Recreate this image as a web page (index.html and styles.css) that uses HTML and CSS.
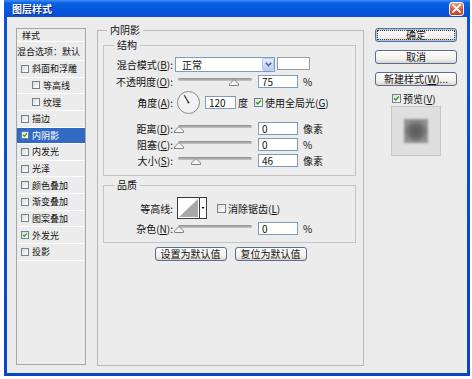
FILE: index.html
```html
<!DOCTYPE html>
<html lang="zh-CN">

<head>
  <meta charset="UTF-8">
  <meta name="viewport" content="width=device-width, initial-scale=1.0">
  <title>图层样式</title>
  <link rel="stylesheet" href="styles.css">
</head>

<body>
  <div class="window">
    <div class="titlebar">
      <span class="title">图层样式</span>
      <span class="close">
        <svg width="9" height="9" viewBox="0 0 9 9"><path d="M1 1 L8 8 M8 1 L1 8" stroke="#fff" stroke-width="1.8" stroke-linecap="round"/></svg>
      </span>
    </div>

    <div class="client">
      <ul class="styles-list">
        <li class="head">样式</li>
        <li class="blend">混合选项：默认</li>
        <li><span class="cb"></span>斜面和浮雕</li>
        <li class="sub"><span class="cb"></span>等高线</li>
        <li class="sub"><span class="cb"></span>纹理</li>
        <li><span class="cb"></span>描边</li>
        <li class="selected"><span class="cb"><svg viewBox="0 0 8 8"><path d="M1.3 3.8 L3.2 5.7 L6.7 1.8" stroke="#21a121" stroke-width="1.6" fill="none"/></svg></span>内阴影</li>
        <li><span class="cb"></span>内发光</li>
        <li><span class="cb"></span>光泽</li>
        <li><span class="cb"></span>颜色叠加</li>
        <li><span class="cb"></span>渐变叠加</li>
        <li><span class="cb"></span>图案叠加</li>
        <li><span class="cb"><svg viewBox="0 0 8 8"><path d="M1.3 3.8 L3.2 5.7 L6.7 1.8" stroke="#21a121" stroke-width="1.6" fill="none"/></svg></span>外发光</li>
        <li><span class="cb"></span>投影</li>
      </ul>

      <fieldset class="panel">
        <legend>内阴影</legend>

        <fieldset class="group">
          <legend>结构</legend>
          <div class="rows structure">
            <div class="row tall">
              <span class="lbl">混合模式(<u>B</u>):</span>
              <div class="select">
                <span>正常</span>
                <span class="drop">
                  <svg width="7" height="5" viewBox="0 0 7 5"><path d="M0.8 0.8 L3.5 3.6 L6.2 0.8" stroke="#4d6185" stroke-width="1.5" fill="none"/></svg>
                </span>
              </div>
              <span class="swatch"></span>
            </div>
            <div class="row">
              <span class="lbl">不透明度(<u>O</u>):</span>
              <div class="slider"><span class="track"></span><span class="thumb" style="left: 75%"></span></div>
              <span class="field">75</span>
              <span class="unit">%</span>
            </div>
            <div class="row angle">
              <span class="lbl">角度(<u>A</u>):</span>
              <svg class="dial" width="25" height="23" viewBox="0 0 25 23">
                <circle cx="12.5" cy="11.5" r="11" fill="#f2f2f2" stroke="#8a8a8a"/>
                <line x1="12.5" y1="11.5" x2="8.3" y2="4.2" stroke="#333" stroke-width="1.2"/>
                <circle cx="12.5" cy="11.5" r="1" fill="#333"/>
              </svg>
              <span class="field short">120</span>
              <span class="unit tight">度</span>
              <span class="cb big"><svg viewBox="0 0 8 8"><path d="M1.3 3.8 L3.2 5.7 L6.7 1.8" stroke="#21a121" stroke-width="1.6" fill="none"/></svg></span>
              <span class="cb-text">使用全局光(<u>G</u>)</span>
            </div>
            <div class="row gap">
              <span class="lbl">距离(<u>D</u>):</span>
              <div class="slider"><span class="track"></span><span class="thumb" style="left: 1%"></span></div>
              <span class="field">0</span>
              <span class="unit">像素</span>
            </div>
            <div class="row">
              <span class="lbl">阻塞(<u>C</u>):</span>
              <div class="slider"><span class="track"></span><span class="thumb" style="left: 1%"></span></div>
              <span class="field">0</span>
              <span class="unit">%</span>
            </div>
            <div class="row">
              <span class="lbl">大小(<u>S</u>):</span>
              <div class="slider"><span class="track"></span><span class="thumb" style="left: 24%"></span></div>
              <span class="field">46</span>
              <span class="unit">像素</span>
            </div>
          </div>
        </fieldset>

        <fieldset class="group quality">
          <legend>品质</legend>
          <div class="rows">
            <div class="row contour-row">
              <span class="lbl">等高线:</span>
              <span class="contour">
                <svg width="30" height="22" viewBox="0 0 30 22">
                  <rect x="0.5" y="0.5" width="29" height="21" fill="#fff" stroke="#3a3a3a"/>
                  <polygon points="2,20 21,2 21,20" fill="#a8a8a8"/>
                  <line x1="22.5" y1="1" x2="22.5" y2="21" stroke="#3a3a3a"/>
                  <polygon points="24.5,10 27.5,10 26,12" fill="#000"/>
                </svg>
              </span>
              <span class="cb big wide"></span>
              <span class="cb-text">消除锯齿(<u>L</u>)</span>
            </div>
            <div class="row">
              <span class="lbl">杂色(<u>N</u>):</span>
              <div class="slider"><span class="track"></span><span class="thumb" style="left: 1%"></span></div>
              <span class="field">0</span>
              <span class="unit">%</span>
            </div>
          </div>
        </fieldset>

        <div class="defaults">
          <button class="btn">设置为默认值</button>
          <button class="btn">复位为默认值</button>
        </div>
      </fieldset>

      <div class="side">
        <button class="btn default">确定</button>
        <button class="btn">取消</button>
        <button class="btn">新建样式(<u>W</u>)...</button>
        <div class="preview-check">
          <span class="cb big"><svg viewBox="0 0 8 8"><path d="M1.3 3.8 L3.2 5.7 L6.7 1.8" stroke="#21a121" stroke-width="1.6" fill="none"/></svg></span>
          <span class="cb-text">预览(<u>V</u>)</span>
        </div>
        <div class="preview">
          <span class="preview-square"></span>
        </div>
      </div>
    </div>
  </div>
</body>

</html>
```

FILE: styles.css
```css
* {
  margin: 0;
  padding: 0;
  box-sizing: border-box;
}

body {
  background: #fff;
  font-family: "Noto Sans CJK SC", "Noto Sans", sans-serif;
  font-size: 10px;
  color: #111;
}

u {
  text-decoration: underline;
}

.window {
  width: 466px;
  height: 376px;
  margin-left: 4px;
  display: flex;
  flex-direction: column;
  background: linear-gradient(to bottom, #0b55da, #0846c4);
}

.titlebar {
  height: 17px;
  display: flex;
  align-items: center;
  padding: 0 6px 0 8px;
  background: linear-gradient(to bottom, #3d8ff7 0, #0c5fe2 3px, #0557dc 60%, #0a4ed2 100%);
}

.title {
  color: #fff;
  font-weight: bold;
  font-size: 10px;
  line-height: 12px;
  text-shadow: 1px 1px 0 #0a2a8a;
}

.close {
  margin-left: auto;
  width: 15px;
  height: 14px;
  border: 1px solid #fff;
  border-radius: 3px;
  background: linear-gradient(to bottom, #ee9a7c, #d9522c 60%, #c8401a);
  display: flex;
  align-items: center;
  justify-content: center;
}

.client {
  flex: 1;
  margin: 0 3px 3px;
  background: #ececec;
  display: flex;
  align-items: flex-start;
  padding-left: 9px;
}

/* styles list */

.styles-list {
  list-style: none;
  margin-top: 11px;
  width: 70px;
  height: 337px;
  border: 1px solid #a6a6a6;
  overflow: hidden;
  font-size: 9px;
}

.styles-list li {
  height: 16.64px;
  display: flex;
  align-items: center;
  padding-left: 4px;
  border-bottom: 1px solid #fff;
  white-space: nowrap;
}

.styles-list li.head {
  height: 13px;
  padding-left: 5px;
}

.styles-list li.blend {
  height: 19px;
  padding-left: 0;
}

.styles-list li.sub {
  padding-left: 15px;
}

.styles-list li.selected {
  background: #316ac5;
  color: #fff;
}

.cb {
  width: 8px;
  height: 8px;
  margin-right: 3px;
  border: 1px solid #6f8296;
  background: linear-gradient(135deg, #dcdcd4, #fff);
  display: inline-flex;
  flex-shrink: 0;
}

.cb svg {
  width: 100%;
  height: 100%;
}

.cb.big {
  width: 9px;
  height: 9px;
  margin-right: 0;
  margin-left: 6px;
}

.cb.wide {
  margin-left: 10px;
}

.cb-text {
  margin-left: 2px;
  white-space: nowrap;
}

/* main panel */

fieldset {
  border: 1px solid #b9b9b9;
  min-width: 0;
}

legend {
  padding: 0 3px;
  line-height: 12px;
  font-size: 10px;
}

.panel {
  margin-left: 11px;
  margin-top: 7px;
  width: 267px;
  height: 342px;
}

.panel > legend {
  margin-left: 9px;
}

.group {
  margin: 3px 0 0 5px;
  width: 253px;
  border-color: #c4c4c4;
}

.group > legend {
  margin-left: 10px;
}

.rows {
  padding: 6px 0 8px;
}

.quality {
  margin-top: 3px;
}

.quality .rows {
  padding-bottom: 7px;
}

.row {
  display: flex;
  align-items: center;
  height: 13px;
  margin-top: 3px;
}

.row:first-child {
  margin-top: 0;
}

.row.tall {
  height: 15px;
}

.row.angle {
  height: 23px;
}

.row.gap {
  margin-top: 8px;
}

.row.contour-row {
  height: 22px;
}

.lbl {
  width: 69px;
  text-align: right;
  white-space: nowrap;
  line-height: 13px;
}

.select {
  margin-left: 2px;
  width: 100px;
  height: 15px;
  border: 1px solid #7f9db9;
  background: #fff;
  display: flex;
  align-items: center;
  padding-left: 6px;
}

.drop {
  margin-left: auto;
  width: 12px;
  height: 13px;
  border: 1px solid #b6cbf6;
  border-radius: 2px;
  background: linear-gradient(to bottom, #e2ebfd, #b9cdf7);
  display: flex;
  align-items: center;
  justify-content: center;
}

.swatch {
  margin-left: 2px;
  width: 33px;
  height: 13px;
  align-self: flex-start;
  border: 1px solid #9c9c9c;
  background: #fff;
}

.slider {
  position: relative;
  margin-left: 5px;
  width: 74px;
  height: 13px;
}

.track {
  display: block;
  margin-top: 3px;
  height: 3px;
  border-radius: 2px;
  background: linear-gradient(to bottom, #8e8e8e, #c8c8c8);
}

.thumb {
  position: absolute;
  top: 4px;
  width: 10px;
  height: 7px;
  margin-left: -5px;
  background: url("data:image/svg+xml,%3Csvg xmlns='http://www.w3.org/2000/svg' width='10' height='7'%3E%3Cpath d='M5 0.5 L9.5 5 L9.5 6.5 L0.5 6.5 L0.5 5 Z' fill='%23f4f4f4' stroke='%23808080'/%3E%3C/svg%3E") no-repeat;
}

.field {
  margin-left: 6px;
  width: 40px;
  height: 13px;
  border: 1px solid #7f9db9;
  background: #fff;
  padding-left: 3px;
  line-height: 11px;
}

.field.short {
  margin-left: 4px;
  width: 31px;
}

.unit {
  margin-left: 5px;
  white-space: nowrap;
}

.unit.tight {
  margin-left: 2px;
}

.dial {
  margin-left: 3px;
}

.contour {
  margin-left: 4px;
  display: flex;
}

.defaults {
  display: flex;
  justify-content: center;
  gap: 8px;
  margin-top: 4px;
}

/* buttons */

.btn {
  width: 72px;
  height: 14px;
  font-family: inherit;
  font-size: 10px;
  line-height: 12px;
  color: #111;
  border: 1px solid #5a6f90;
  border-radius: 3px;
  background: linear-gradient(to bottom, #fff, #f0efeb 70%, #d8d4cc);
}

.side {
  margin-left: 11px;
  margin-top: 11px;
  width: 82px;
  display: flex;
  flex-direction: column;
}

.side .btn {
  width: 82px;
  margin-bottom: 8px;
}

.btn.default {
  box-shadow: inset 0 0 0 1px #a9c2ee;
  outline: 1px dotted #333;
  outline-offset: -3px;
}

.preview-check {
  display: flex;
  align-items: center;
  height: 10px;
  margin-top: -1px;
  padding-left: 11px;
}

.preview {
  margin-top: 3px;
  margin-left: 16px;
  width: 50px;
  height: 50px;
  border: 1px solid #c6c6c6;
  background: #dfdfdf;
  display: flex;
  align-items: center;
  justify-content: center;
}

.preview-square {
  width: 24px;
  height: 24px;
  background: radial-gradient(closest-side, #565656, #6e6e6e 60%, #939393);
  filter: blur(0.8px);
}
```
